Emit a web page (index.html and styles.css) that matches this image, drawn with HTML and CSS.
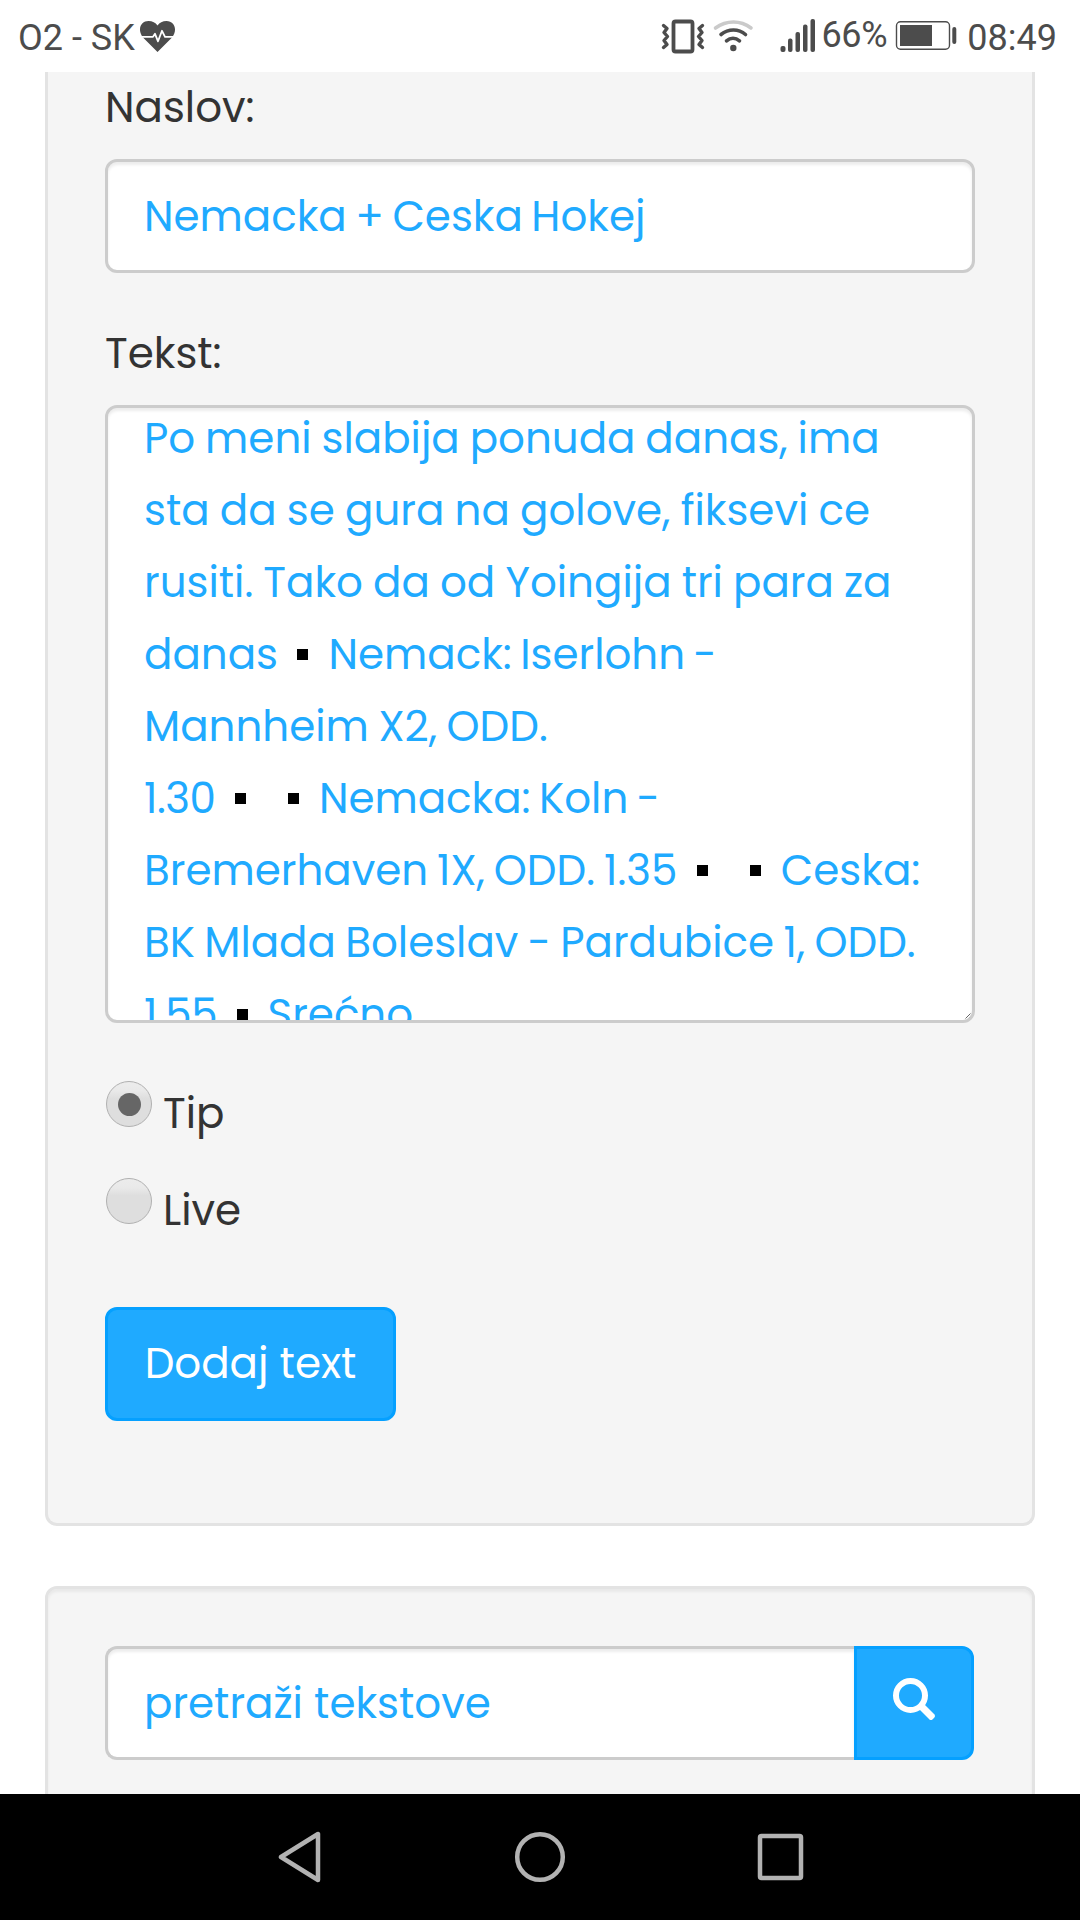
FILE: index.html
```
<!DOCTYPE html>
<html lang="sr">
<head>
<meta charset="UTF-8">
<meta name="viewport" content="width=device-width, initial-scale=1.0">
<title>Dodaj text</title>
<link rel="stylesheet" href="styles.css">
</head>
<body>

<header class="status-bar">
  <span class="carrier">O2 - SK</span>
  <svg class="heart" width="36" height="72" viewBox="140 0 36 72">
    <path fill="#4c4c4c" d="M157.500 52L143 37.500C137 30 140.500 21 148.500 21c4 0 7 1.500 9 4.500 2-3 5-4.500 9-4.500 8 0 11.500 9 5.500 16.500z"/>
    <path fill="none" stroke="#fff" stroke-width="1.8" stroke-linejoin="round" d="M140 36.800h13l2-3 3 7.500 4-10.500 3 6h11"/>
  </svg>
  <span class="spacer"></span>
  <svg width="44" height="72" viewBox="660 0 44 72" fill="none" stroke="#4c4c4c" stroke-linecap="round" stroke-linejoin="round">
    <rect x="672.500" y="21.500" width="19" height="30" rx="2" stroke-width="3.800"/>
    <path stroke-width="3.400" d="M662.500 25.500l3.500 3-3 4 3.500 4-3.500 4 3 4-3.500 3M701.500 25.500l-3.500 3 3 4-3.500 4 3.500 4-3 4 3.500 3"/>
  </svg>
  <svg class="wifi" width="42" height="72" viewBox="711 0 42 72" fill="none" stroke="#4c4c4c" stroke-width="3.600" stroke-linecap="round">
    <path stroke="#cacaca" d="M714.500 28c11-8 25-8 35.500 0"/>
    <path d="M720 34.500c7.500-6 17.500-6 24.500 0M725.500 40.800c4-3.400 9-3.400 13 0"/>
    <circle cx="732.300" cy="48" r="3.200" fill="#4c4c4c" stroke="none"/>
  </svg>
  <svg class="signal" width="36" height="72" viewBox="779 0 36 72" fill="#4c4c4c">
    <rect x="779.500" y="46" width="5" height="6" rx="2"/>
    <rect x="787" y="38.500" width="4.500" height="13.500" rx="2"/>
    <rect x="794.500" y="32" width="4.500" height="20" rx="2"/>
    <rect x="802" y="24.500" width="4.500" height="27.500" rx="2"/>
    <rect x="809.500" y="19" width="4.500" height="33" rx="2"/>
  </svg>
  <span class="percent">66%</span>
  <svg class="battery" width="62" height="72" viewBox="895 0 62 72" fill="#4c4c4c">
    <rect x="896.500" y="21.700" width="53" height="27.500" rx="4" fill="none" stroke="#4c4c4c" stroke-width="1.400"/>
    <rect x="900" y="25" width="32" height="21"/>
    <rect x="952.300" y="27" width="4" height="17" rx="2"/>
  </svg>
  <span class="clock">08:49</span>
</header>

<main class="page">
  <form class="well well-top">
    <label class="field-label">Naslov:</label>
    <div class="form-control title-field">Nemacka + Ceska Hokej</div>

    <label class="field-label label-text">Tekst:</label>
    <div class="form-control textarea">
      <div class="text">
        <div class="line l1">Po meni slabija ponuda danas, ima</div>
        <div class="line l2">sta da se gura na golove, fiksevi ce</div>
        <div class="line l3">rusiti. Tako da od Yoingija tri para za</div>
        <div class="line l4"><span>danas</span><i class="mark"></i><span>Nemack: Iserlohn -</span></div>
        <div class="line l5">Mannheim X2, ODD.</div>
        <div class="line l6"><span class="odd">1.30</span><i class="mark"></i><i class="mark"></i><span>Nemacka: Koln -</span></div>
        <div class="line l7"><span>Bremerhaven 1X, ODD. 1.35</span><i class="mark"></i><i class="mark"></i><span>Ceska:</span></div>
        <div class="line l8">BK Mlada Boleslav - Pardubice 1, ODD.</div>
        <div class="line l9"><span class="odd">1.55</span><i class="mark"></i><span>Srećno</span></div>
      </div>
      <svg class="grip" width="6" height="6" viewBox="0 0 6 6" stroke="#555" stroke-width="0.900"><path d="M0.500 5.500l5-5M3.500 5.500l2-2"/></svg>
    </div>

    <label class="radio"><span class="dot checked"></span><span>Tip</span></label>
    <label class="radio"><span class="dot"></span><span>Live</span></label>

    <button type="button" class="btn btn-add">Dodaj text</button>
  </form>

  <div class="well well-search">
    <div class="input-group">
      <div class="form-control search-field">pretraži tekstove</div>
      <button type="button" class="btn btn-search">
        <svg width="44" height="44" viewBox="0 0 44 44" fill="none" stroke="#fff">
          <circle cx="17.500" cy="17.500" r="14.500" stroke-width="6"/>
          <path stroke-width="7" stroke-linejoin="round" d="M27.500 27.500l11.500 11.500"/>
          <path stroke-width="4" stroke-linecap="round" d="M38 40l2-2"/>
        </svg>
      </button>
    </div>
  </div>
</main>

<nav class="nav-bar">
  <svg width="44" height="52" viewBox="0 0 44 52"><path d="M40 3v46L3 26z"/></svg>
  <svg width="52" height="52" viewBox="0 0 52 52"><circle cx="26" cy="26" r="22.800"/></svg>
  <svg width="48" height="52" viewBox="0 0 48 52"><rect x="3" y="5" width="41" height="42" rx="1.500"/></svg>
</nav>

</body>
</html>
```
FILE: styles.css
```
* {
  box-sizing: border-box;
}

body {
  margin: 0;
  height: 1920px;
  overflow: hidden;
  display: flex;
  flex-direction: column;
  background-color: #fff;
  color: #333;
  font-family: Poppins, Inter, sans-serif;
  font-size: 42px;
}

svg {
  display: block;
  flex: none;
}

/* status bar */
.status-bar {
  height: 72px;
  flex: none;
  display: flex;
  align-items: flex-start;
  padding-left: 18px;
  padding-right: 23px;
  font-family: Roboto, sans-serif;
  font-size: 36px;
  line-height: 77px;
  color: #4c4c4c;
}

.heart {
  margin-left: 5px;
}

.spacer {
  flex: 1;
}

.wifi {
  margin-left: 7px;
}

.signal {
  margin-left: 26px;
}

.percent {
  margin-left: 5px;
  line-height: 70px;
  letter-spacing: -0.3px;
}

.battery {
  margin-left: 8px;
}

.clock {
  margin-left: 10px;
}

/* page */
.page {
  flex: 1;
  min-height: 0;
  overflow: hidden;
  padding: 0 45px;
}

.well {
  background-color: #f5f5f5;
  border: 3px solid #e3e3e3;
  border-radius: 12px;
  padding: 57px;
  box-shadow: inset 0 3px 3px rgba(0, 0, 0, 0.05);
}

.well-top {
  border-top: none;
  border-radius: 0 0 12px 12px;
  padding-top: 0;
  padding-bottom: 102px;
  margin-bottom: 60px;
  box-shadow: none;
}

.well-search {
  height: 300px;
}

.field-label {
  display: block;
  line-height: 72px;
  margin-bottom: 15px;
}

.label-text {
  margin-top: 45px;
}

.form-control {
  height: 114px;
  line-height: 110px;
  padding: 0 36px;
  background-color: #fff;
  border: 3px solid #ccc;
  border-radius: 12px;
  box-shadow: inset 0 3px 3px rgba(0, 0, 0, 0.075);
  color: #1faaff;
  white-space: nowrap;
}

.title-field {
  word-spacing: -2.7px;
}

.textarea {
  position: relative;
  height: 618px;
  overflow: hidden;
  margin-bottom: 55px;
}

.text {
  margin-top: -5px;
}

.line {
  display: flex;
  height: 72px;
  line-height: 72px;
}

.l1 { word-spacing: -1.3px; }
.l2 { word-spacing: -1px; }
.l3 { word-spacing: -1.1px; }
.l4 { word-spacing: -2.8px; }
.l5 { word-spacing: -1.6px; }
.l6 { word-spacing: -2.7px; }
.l7 { word-spacing: -2.3px; }
.l8 { word-spacing: -1.9px; }

.odd {
  letter-spacing: -0.5px;
}

.mark {
  width: 11px;
  height: 11px;
  margin: 30px 20px 0 19.5px;
  background-color: #000;
}

.mark + .mark {
  margin-left: 22px;
}

.grip {
  position: absolute;
  right: 1px;
  bottom: 1px;
}

.radio {
  display: flex;
  gap: 11px;
  height: 70px;
  line-height: 72px;
  margin-bottom: 27px;
  padding-left: 1px;
}

.dot {
  width: 46px;
  height: 46px;
  margin-top: 3px;
  border: 1px solid #b0b0b0;
  border-radius: 50%;
  background: linear-gradient(#ececec 0%, #e9e9e9 20%, #dedede 38%, #dedede 100%);
}

.checked {
  display: flex;
  align-items: center;
  justify-content: center;
}

.checked::after {
  content: "";
  width: 23px;
  height: 23px;
  border-radius: 50%;
  background-color: #666;
}

.btn {
  display: block;
  height: 114px;
  padding: 0;
  font: inherit;
  color: #fff;
  background-color: #1faaff;
  border: 3px solid #05a0ff;
  border-radius: 12px;
}

.btn-add {
  width: 291px;
  margin-top: 62px;
  line-height: 106px;
}

.input-group {
  display: flex;
  margin-right: 1px;
}

.search-field {
  flex: 1;
  border-right: none;
  border-radius: 12px 0 0 12px;
}

.btn-search {
  display: flex;
  width: 120px;
  padding: 29px 0 0 36px;
  border-radius: 0 12px 12px 0;
}

/* android navigation */
.nav-bar {
  height: 126px;
  flex: none;
  display: flex;
  justify-content: space-between;
  padding: 37px 275px 0 278px;
  background-color: #000;
}

.nav-bar svg {
  fill: none;
  stroke: #b2b2b2;
  stroke-width: 4.5;
  stroke-linejoin: round;
}
```
